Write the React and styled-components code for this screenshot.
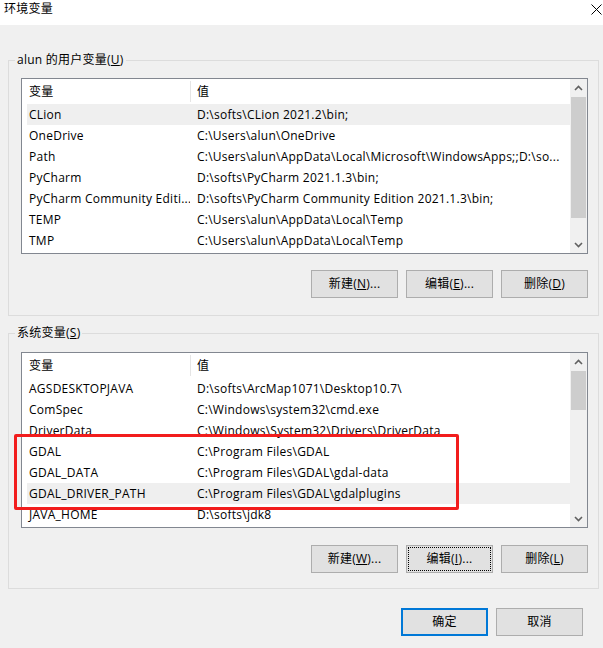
import React from "react";
import styled, { createGlobalStyle } from "styled-components";

const GlobalStyle = createGlobalStyle`
  html, body { margin: 0; padding: 0; }
  body {
    width: 603px;
    height: 648px;
    overflow: hidden;
    background: #f0f0f0;
    font-family: "Segoe UI", "Open Sans", "Noto Sans CJK SC", sans-serif;
    font-size: 12px;
    letter-spacing: 0.25px;
    color: #000;
  }
  * { box-sizing: border-box; }
`;

const Window = styled.div`
  position: relative;
  width: 603px;
  height: 648px;
  display: flex;
  flex-direction: column;
  background: #f0f0f0;
`;

const TitleBar = styled.div`
  height: 25px;
  flex: none;
  background: #fff;
  display: flex;
  justify-content: space-between;
  align-items: flex-start;
  padding: 1px 1px 0 4px;
  line-height: 16px;
`;

const CloseIcon = styled.svg`
  width: 11px;
  height: 11px;
  margin-top: 3px;
`;

const Main = styled.div`
  flex: 1;
  display: flex;
  flex-direction: column;
  padding: 0 4px 0 8px;
`;

const Group = styled.fieldset`
  margin: ${(p) => p.$top}px 0 0 0;
  border: 1px solid #dcdcdc;
  padding: ${(p) => p.$pt}px 10px ${(p) => p.$pb}px 12px;
  min-width: 0;
`;

const Legend = styled.legend`
  padding: 0 2px;
  margin-left: -6px;
  line-height: 16px;
  height: 16px;
`;

const ListBox = styled.div`
  display: flex;
  height: 176px;
  border: 1px solid #828790;
  background: #fff;
`;

const ListMain = styled.div`
  flex: 1;
  min-width: 0;
  display: flex;
  flex-direction: column;
`;

const HeaderRow = styled.div`
  height: 25px;
  flex: none;
  display: flex;
  align-items: center;
`;

const HeaderCell = styled.div`
  width: ${(p) => (p.$w ? `${p.$w}px` : "auto")};
  flex: ${(p) => (p.$w ? "none" : "1")};
  padding-left: ${(p) => p.$pad}px;
  line-height: 25px;
`;

const HeaderDivider = styled.div`
  width: 1px;
  height: 21px;
  background: #e5e5e5;
  flex: none;
`;

const Row = styled.div`
  height: 21px;
  flex: none;
  margin-left: 5px;
  display: flex;
  align-items: center;
  line-height: 21px;
  background: ${(p) => (p.$hl ? "#efefef" : "transparent")};
`;

const NameCell = styled.div`
  width: 163px;
  flex: none;
  padding-left: 2px;
  padding-right: 4px;
  white-space: nowrap;
  overflow: hidden;
`;

const ValueCell = styled.div`
  flex: 1;
  min-width: 0;
  padding-left: 7px;
  white-space: nowrap;
  overflow: hidden;
`;

const ScrollBar = styled.div`
  width: 17px;
  flex: none;
  background: #f0f0f0;
  display: flex;
  flex-direction: column;
`;

const Arrow = styled.div`
  height: 17px;
  flex: none;
  display: flex;
  align-items: center;
  justify-content: center;
`;

const Track = styled.div`
  flex: 1;
  display: flex;
  flex-direction: column;
`;

const Thumb = styled.div`
  margin: 0 1px;
  background: #cdcdcd;
  flex: none;
`;

const ButtonRow = styled.div`
  display: flex;
  justify-content: flex-end;
  gap: 8px;
  margin-top: ${(p) => p.$top}px;
  padding-right: ${(p) => p.$right || 0}px;
`;

const Button = styled.div`
  width: 87px;
  height: 28px;
  display: flex;
  align-items: center;
  justify-content: center;
  background: #e1e1e1;
  border: ${(p) => (p.$primary ? "2px solid #0078d7" : "1px solid #adadad")};
  outline: ${(p) => (p.$focus ? "1px dotted #000" : "none")};
  outline-offset: -3px;
  line-height: 16px;
  padding-bottom: 1px;
`;

const RedMark = styled.div`
  position: absolute;
  left: 14px;
  top: 434px;
  width: 445px;
  height: 76px;
  border: 3px solid #f21d1d;
  border-radius: 2px;
  pointer-events: none;
`;

const Chevron = ({ up }) => (
  <svg width="9" height="6" viewBox="0 0 9 6">
    <path
      d={up ? "M1 5 L4.5 1.5 L8 5" : "M1 1 L4.5 4.5 L8 1"}
      fill="none"
      stroke="#606060"
      strokeWidth="1.6"
    />
  </svg>
);

const Mn = ({ children }) => <u>{children}</u>;

const userVars = [
  ["CLion", "D:\\softs\\CLion 2021.2\\bin;", true],
  ["OneDrive", "C:\\Users\\alun\\OneDrive"],
  ["Path", "C:\\Users\\alun\\AppData\\Local\\Microsoft\\WindowsApps;;D:\\so..."],
  ["PyCharm", "D:\\softs\\PyCharm 2021.1.3\\bin;"],
  ["PyCharm Community Editi...", "D:\\softs\\PyCharm Community Edition 2021.1.3\\bin;"],
  ["TEMP", "C:\\Users\\alun\\AppData\\Local\\Temp"],
  ["TMP", "C:\\Users\\alun\\AppData\\Local\\Temp"],
];

const sysVars = [
  ["AGSDESKTOPJAVA", "D:\\softs\\ArcMap1071\\Desktop10.7\\"],
  ["ComSpec", "C:\\Windows\\system32\\cmd.exe"],
  ["DriverData", "C:\\Windows\\System32\\Drivers\\DriverData"],
  ["GDAL", "C:\\Program Files\\GDAL"],
  ["GDAL_DATA", "C:\\Program Files\\GDAL\\gdal-data"],
  ["GDAL_DRIVER_PATH", "C:\\Program Files\\GDAL\\gdalplugins", true],
  ["JAVA_HOME", "D:\\softs\\jdk8"],
];

const VarList = ({ rows, thumbTop, thumbHeight }) => (
  <ListBox>
    <ListMain>
      <HeaderRow>
        <HeaderCell $w={168} $pad={7}>变量</HeaderCell>
        <HeaderDivider />
        <HeaderCell $pad={6}>值</HeaderCell>
      </HeaderRow>
      {rows.map(([n, v, hl]) => (
        <Row key={n} $hl={hl}>
          <NameCell>{n}</NameCell>
          <ValueCell>{v}</ValueCell>
        </Row>
      ))}
    </ListMain>
    <ScrollBar>
      <Arrow>
        <Chevron up />
      </Arrow>
      <Track>
        <Thumb style={{ marginTop: thumbTop, height: thumbHeight }} />
      </Track>
      <Arrow>
        <Chevron />
      </Arrow>
    </ScrollBar>
  </ListBox>
);

export default function App() {
  return (
    <>
      <GlobalStyle />
      <Window>
        <TitleBar>
          <span>环境变量</span>
          <CloseIcon viewBox="0 0 11 11">
            <path d="M0.5 0.5 L10.5 10.5 M10.5 0.5 L0.5 10.5" stroke="#000" strokeWidth="1" fill="none" />
          </CloseIcon>
        </TitleBar>
        <Main>
          <Group $top={27} $pt={10} $pb={17}>
            <Legend>
              alun 的用户变量(<Mn>U</Mn>)
            </Legend>
            <VarList rows={userVars} thumbTop={1} thumbHeight={121} />
            <ButtonRow $top={16}>
              <Button>新建(<Mn>N</Mn>)...</Button>
              <Button>编辑(<Mn>E</Mn>)...</Button>
              <Button>删除(<Mn>D</Mn>)</Button>
            </ButtonRow>
          </Group>
          <Group $top={9} $pt={11} $pb={15}>
            <Legend>
              系统变量(<Mn>S</Mn>)
            </Legend>
            <VarList rows={sysVars} thumbTop={1} thumbHeight={39} />
            <ButtonRow $top={17}>
              <Button>新建(<Mn>W</Mn>)...</Button>
              <Button $focus>编辑(<Mn>I</Mn>)...</Button>
              <Button>删除(<Mn>L</Mn>)</Button>
            </ButtonRow>
          </Group>
          <ButtonRow $top={19} $right={16}>
            <Button $primary>确定</Button>
            <Button>取消</Button>
          </ButtonRow>
        </Main>
        <RedMark />
      </Window>
    </>
  );
}
